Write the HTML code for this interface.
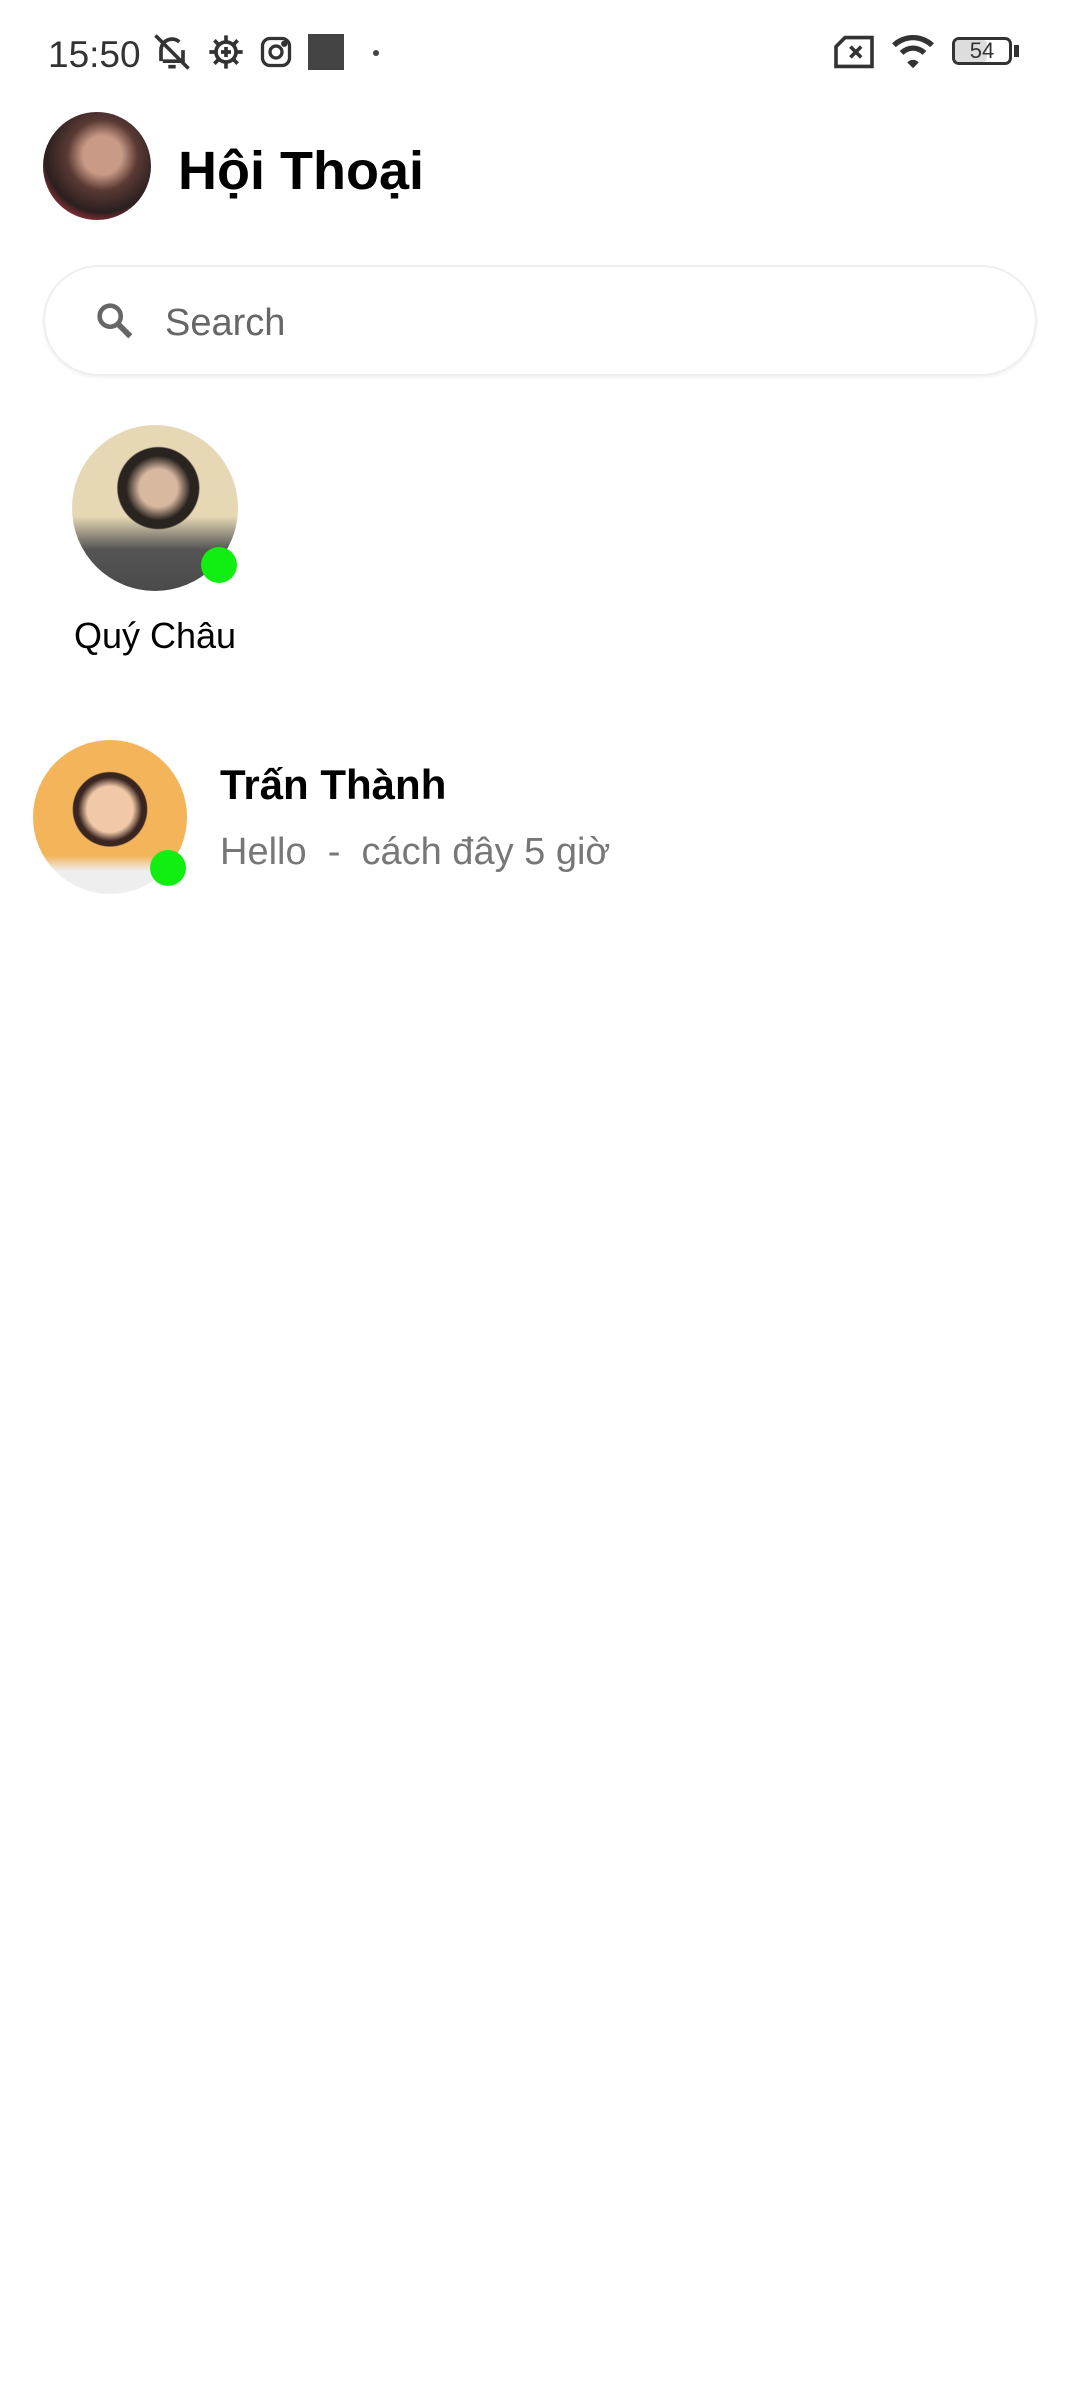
<!DOCTYPE html>
<html><head><meta charset="utf-8"><style>
body{margin:0;width:1080px;height:2400px;background:#fff;font-family:"Liberation Sans","Noto Sans CJK SC",sans-serif;position:relative;overflow:hidden}
.a{position:absolute}
.av{position:absolute;border-radius:50%}
.dot{position:absolute;width:36px;height:36px;border-radius:50%;background:#11ee11}
</style></head><body>
<div class="a" style="left:48px;top:34px;font-size:37px;color:#333">15:50</div>
<svg class="a" style="left:150px;top:30px" width="44" height="44" viewBox="0 0 24 24" fill="none" stroke="#333" stroke-width="2"><path d="M6 17V11a6 6 0 0 1 10-4.5M18 11v6H7M10 20h4M3 3l18 18"/></svg>
<svg class="a" style="left:206px;top:32px" width="40" height="40" viewBox="0 0 24 24" fill="none" stroke="#333" stroke-width="2.2"><circle cx="12" cy="12" r="6"/><path d="M12 2v4M12 18v4M2 12h4M18 12h4M5 5l3 3M16 16l3 3M5 19l3-3M16 8l3-3M9 12h6M12 9v6"/></svg>
<svg class="a" style="left:258px;top:34px" width="36" height="36" viewBox="0 0 24 24" fill="none" stroke="#333" stroke-width="2.2"><rect x="3" y="3" width="18" height="18" rx="5"/><circle cx="12" cy="12" r="4"/><circle cx="17.5" cy="6.5" r="1" fill="#333"/></svg>
<div class="a" style="left:308px;top:34px;width:36px;height:36px;background:#444"></div>
<div class="a" style="left:373px;top:50px;width:6px;height:6px;border-radius:50%;background:#444"></div>
<svg class="a" style="left:832px;top:34px" width="44" height="36" viewBox="0 0 24 20" fill="none" stroke="#333" stroke-width="2"><path d="M7 2h15v16H2V7z"/><path d="M10 7l6 6M16 7l-6 6"/></svg>
<svg class="a" style="left:890px;top:30px" width="46" height="42" viewBox="0 0 24 22" fill="#333"><path d="M12 20l3-3a4 4 0 0 0-6 0z"/><path d="M1 7a16 16 0 0 1 22 0l-2 2a13 13 0 0 0-18 0zM5 11a10 10 0 0 1 14 0l-2 2a7 7 0 0 0-10 0z"/></svg>
<div class="a" style="left:952px;top:37px;width:60px;height:28px;border:3px solid #333;border-radius:7px;box-sizing:border-box"></div>
<div class="a" style="left:955px;top:40px;width:32px;height:22px;background:#ddd;border-radius:4px"></div>
<div class="a" style="left:1014px;top:45px;width:5px;height:12px;background:#333"></div>
<div class="a" style="left:952px;top:37px;width:60px;text-align:center;font-size:22px;line-height:28px;color:#333">54</div>

<div class="av" style="left:43px;top:112px;width:108px;height:108px;background:radial-gradient(circle at 55% 40%,#c99a86 0 22%,#5a3a34 40%,#2a1f1f 65%,#a8343e 80%,#d7c4c0 100%)"></div>
<div class="a" style="left:178px;top:140px;font-size:54px;font-weight:bold;color:#000">Hội Thoại</div>

<div class="a" style="left:43px;top:265px;width:994px;height:111px;border:2px solid #eee;border-radius:56px;box-sizing:border-box;box-shadow:0 2px 3px rgba(0,0,0,0.05)"></div>
<svg class="a" style="left:92px;top:298px" width="46" height="46" viewBox="0 0 24 24" fill="none" stroke="#666" stroke-width="2.4"><circle cx="9.5" cy="9.5" r="5.5"/><path d="M13.5 13.5l6.5 6.5" stroke-width="3"/></svg>
<div class="a" style="left:165px;top:302px;font-size:38px;color:#666">Search</div>

<div class="av" style="left:72px;top:425px;width:166px;height:166px;background:radial-gradient(circle at 52% 38%,#d9b8a0 0 14%,#2a2420 24%,#2a2420 30%,transparent 31%),linear-gradient(#e6d8b4 0 55%,#555 75%,#4a4a4a)"></div>
<div class="dot" style="left:201px;top:547px"></div>
<div class="a" style="left:55px;top:615px;width:200px;text-align:center;font-size:36px;color:#000">Quý Châu</div>

<div class="av" style="left:33px;top:740px;width:154px;height:154px;background:radial-gradient(circle at 50% 45%,#f1c9a8 0 20%,#3a2520 28%,#3a2520 32%,transparent 33%),linear-gradient(#f4b45a 0 75%,#eee 85%)"></div>
<div class="dot" style="left:150px;top:850px"></div>
<div class="a" style="left:220px;top:761px;font-size:42px;font-weight:bold;color:#000">Trấn Thành</div>
<div class="a" style="left:220px;top:831px;font-size:38px;color:#777;white-space:pre">Hello  -  cách đây 5 giờ</div>
</body></html>
